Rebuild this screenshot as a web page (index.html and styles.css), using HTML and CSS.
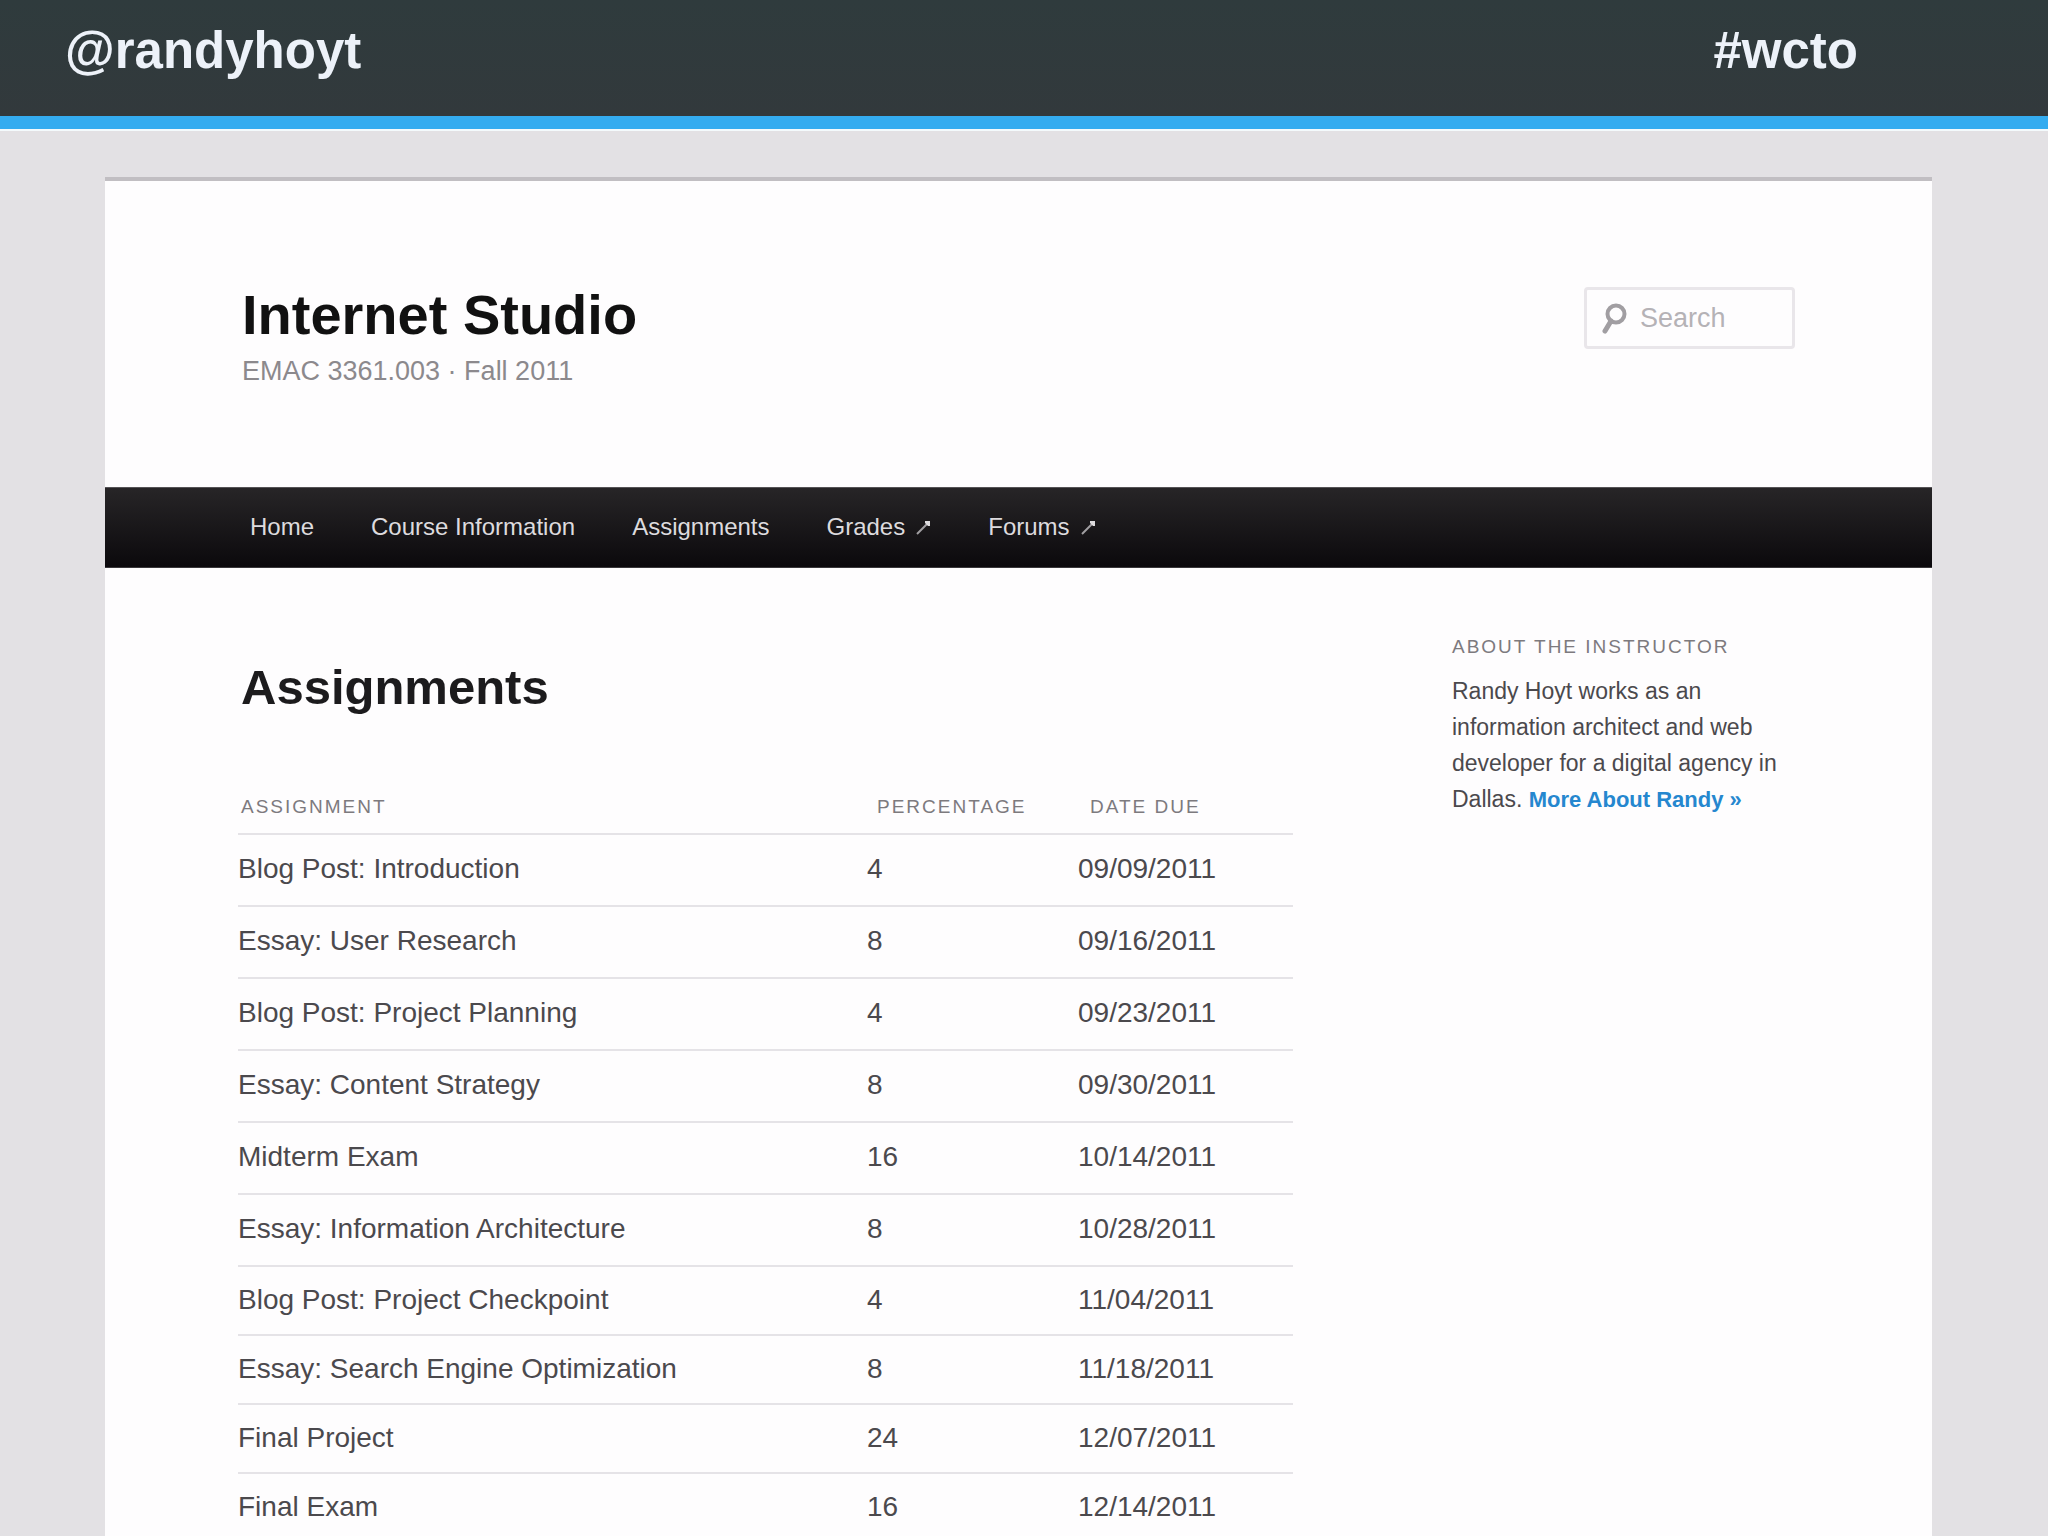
FILE: index.html
```html
<!DOCTYPE html>
<html lang="en">
<head>
  <meta charset="UTF-8">
  <meta name="viewport" content="width=device-width, initial-scale=1.0">
  <title>Assignments | Internet Studio</title>
  <link rel="stylesheet" href="styles.css">
</head>
<body>
  <div class="topbar">
    <span>@randyhoyt</span>
    <span>#wcto</span>
  </div>

  <div class="page">
    <header class="site-header">
      <div>
        <div class="site-title">Internet Studio</div>
        <div class="site-description">EMAC 3361.003 · Fall 2011</div>
      </div>
      <form class="search">
        <label for="search">
          <svg width="26" height="32" viewBox="0 0 26 32" fill="none" stroke="#a19ea2" role="img" aria-label="Search">
            <circle cx="15" cy="12" r="8.5" stroke-width="4"/>
            <path d="M10 19L4 29" stroke-width="5" stroke-linecap="round"/>
          </svg>
        </label>
        <input type="text" id="search" name="s" placeholder="Search">
      </form>
    </header>

    <nav class="menu">
      <a href="#">Home</a>
      <a href="#">Course Information</a>
      <a href="#">Assignments</a>
      <a href="#" class="external">Grades
        <svg width="15" height="15" viewBox="0 0 15 15"><path d="M1 14L11 4" stroke="#a19fa2" stroke-width="2"/><path d="M9 1H14V6L12 6L9 3Z" fill="#dddbde"/></svg>
      </a>
      <a href="#" class="external">Forums
        <svg width="15" height="15" viewBox="0 0 15 15"><path d="M1 14L11 4" stroke="#a19fa2" stroke-width="2"/><path d="M9 1H14V6L12 6L9 3Z" fill="#dddbde"/></svg>
      </a>
    </nav>

    <div class="content">
      <main>
        <h1>Assignments</h1>
        <table>
          <thead>
            <tr>
              <th>Assignment</th>
              <th class="percentage">Percentage</th>
              <th class="due">Date Due</th>
            </tr>
          </thead>
          <tbody>
            <tr><td>Blog Post: Introduction</td><td>4</td><td>09/09/2011</td></tr>
            <tr><td>Essay: User Research</td><td>8</td><td>09/16/2011</td></tr>
            <tr><td>Blog Post: Project Planning</td><td>4</td><td>09/23/2011</td></tr>
            <tr><td>Essay: Content Strategy</td><td>8</td><td>09/30/2011</td></tr>
            <tr><td>Midterm Exam</td><td>16</td><td>10/14/2011</td></tr>
            <tr><td>Essay: Information Architecture</td><td>8</td><td>10/28/2011</td></tr>
          </tbody>
          <tbody class="second-half">
            <tr><td>Blog Post: Project Checkpoint</td><td>4</td><td>11/04/2011</td></tr>
            <tr><td>Essay: Search Engine Optimization</td><td>8</td><td>11/18/2011</td></tr>
            <tr><td>Final Project</td><td>24</td><td>12/07/2011</td></tr>
            <tr><td>Final Exam</td><td>16</td><td>12/14/2011</td></tr>
          </tbody>
        </table>
      </main>

      <aside>
        <h2>About the Instructor</h2>
        <p>Randy Hoyt works as an information architect and web developer for a digital agency in Dallas. <a href="#">More About Randy »</a></p>
      </aside>
    </div>
  </div>
</body>
</html>
```
FILE: styles.css
```css
* {
  box-sizing: border-box;
}
body {
  font-family: Arial, "Liberation Sans", sans-serif;
  margin: 0;
  min-height: 100vh;
  display: flex;
  flex-direction: column;
  background-color: #e3e1e4;
}
a {
  text-decoration: none;
}

/* Top bar */
.topbar {
  display: flex;
  justify-content: space-between;
  padding: 21px 190px 35px 65px;
  background: linear-gradient(#2f3b3d, #32393c);
  border-bottom: 13px solid #34acf0;
  box-shadow: 0 2px 0 #f4fafc;
  color: #edf2f9;
  font-size: 51px;
  font-weight: bold;
  line-height: 60px;
}

/* Page */
.page {
  flex: 1;
  margin: 48px 116px 0 105px;
  border-top: 4px solid #c1bec2;
  background-color: #fefdfe;
}
.site-header {
  display: flex;
  justify-content: space-between;
  align-items: flex-start;
  padding: 102px 137px 100px;
}
.site-title {
  color: #111;
  font-size: 56px;
  font-weight: bold;
  line-height: 64px;
}
.site-description {
  margin-top: 8px;
  color: #8c898d;
  font-size: 27px;
  line-height: 32px;
}
.search {
  display: flex;
  align-items: center;
  width: 211px;
  height: 62px;
  margin-top: 4px;
  padding-left: 14px;
  border: 3px solid #e9e6ea;
  border-radius: 4px;
}
.search svg {
  display: block;
}
.search input {
  width: 100%;
  min-width: 0;
  padding: 0 0 0 13px;
  border: none;
  outline: none;
  background: none;
  color: #555;
  font-family: inherit;
  font-size: 27px;
}
.search input::placeholder {
  color: #b5b2b6;
  opacity: 1;
}

/* Menu */
.menu {
  display: flex;
  gap: 57px;
  padding: 25px 145px 26px;
  border-top: 1px solid #555356;
  border-bottom: 1px solid #3a383b;
  background: linear-gradient(#272527, #0b090c);
  font-size: 24px;
  line-height: 28px;
}
.menu a {
  color: #dddbde;
}
.external {
  display: flex;
  align-items: center;
  gap: 11px;
}

/* Content */
.content {
  display: grid;
  grid-template-columns: minmax(0, 1fr) 343px;
  gap: 159px;
  padding: 0 137px 0 133px;
}
h1 {
  margin: 91px 0 80px;
  padding-left: 3px;
  color: #1c1b1d;
  font-size: 49px;
  line-height: 56px;
}
table {
  width: 100%;
  table-layout: fixed;
  border-collapse: separate;
  border-spacing: 0;
  color: #4b494d;
  font-size: 28px;
  line-height: 32px;
}
th, td {
  border-bottom: 2px solid #e5e3e7;
  text-align: left;
}
th, h2 {
  color: #7d7a7e;
  font-size: 19px;
  font-weight: normal;
  letter-spacing: 2px;
  line-height: 24px;
  text-transform: uppercase;
}
th {
  padding: 0 0 14px 3px;
}
th.percentage {
  width: 211px;
  padding-left: 10px;
}
th.due {
  width: 215px;
  padding-left: 12px;
}
td {
  padding: 18px 0 20px;
}
.second-half td {
  padding: 17px 0 18px;
}
.second-half tr:last-child td {
  padding-bottom: 0;
  border-bottom: none;
}

/* Sidebar */
h2 {
  margin: 67px 0 14px;
}
aside p {
  margin: 0;
  color: #4b494d;
  font-size: 23px;
  line-height: 36px;
}
aside a {
  color: #2587cf;
  font-size: 22px;
  font-weight: bold;
}
```
